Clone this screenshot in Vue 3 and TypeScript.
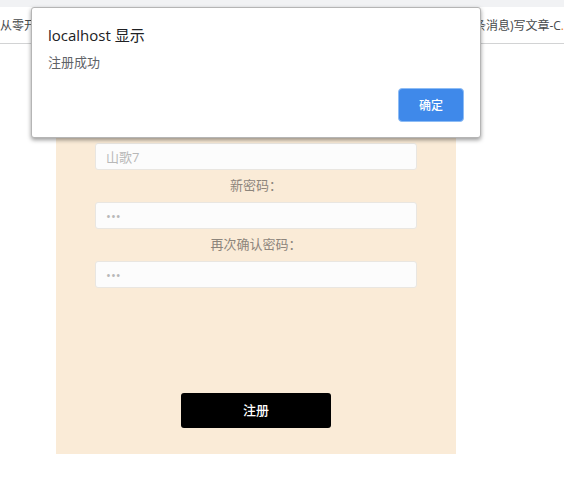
<script setup lang="ts">
import { ref } from 'vue'

const username = ref<string>('山歌7')
const password = ref<string>('123')
const confirmation = ref<string>('123')
const dialogOpen = ref<boolean>(true)

function register(): void {
  dialogOpen.value = true
}
</script>

<template>
  <div class="window">
    <div class="toolbar"></div>
    <nav class="bookmarks">
      <a href="#">从零开</a>
      <a href="#">条消息)写文章-C<span class="mark">.</span></a>
    </nav>

    <main class="page">
      <form class="card" @submit.prevent="register">
        <input v-model="username" class="field" type="text" aria-label="用户名" />
        <label class="label" for="password">新密码：</label>
        <input id="password" v-model="password" class="field" type="password" />
        <label class="label" for="confirmation">再次确认密码：</label>
        <input id="confirmation" v-model="confirmation" class="field" type="password" />
        <button class="submit" type="submit">注册</button>
      </form>
    </main>

    <div v-if="dialogOpen" class="dialog" role="alertdialog" aria-labelledby="title" aria-describedby="message">
      <h1 id="title">localhost 显示</h1>
      <p id="message">注册成功</p>
      <button class="confirm" type="button" @click="dialogOpen = false">确定</button>
    </div>
  </div>
</template>

<style>
body {
  margin: 0;
  background: #fff;
}
</style>

<style scoped>
.window {
  position: relative;
  min-height: 100vh;
  overflow: hidden;
  font-family: "Open Sans", "Noto Sans CJK SC", sans-serif;
  font-size: 13px;
}

.toolbar {
  height: 7px;
  background: #f1f2f4;
}

.bookmarks {
  display: flex;
  justify-content: space-between;
  align-items: center;
  height: 36px;
  border-bottom: 1px solid #d2d3d4;
  font-size: 12px;
}

.bookmarks a {
  color: #46494c;
  text-decoration: none;
  white-space: nowrap;
}

.mark {
  color: #f08030;
}

.page {
  padding: 40px 56px 26px;
}

.card {
  display: flex;
  flex-direction: column;
  align-items: center;
  box-sizing: border-box;
  max-width: 400px;
  padding: 59px 39px 26px;
  background: #faebd7;
}

.field {
  box-sizing: border-box;
  width: 100%;
  height: 27px;
  padding: 0 10px;
  border: 1px solid #e9e6e1;
  border-radius: 3px;
  background: #fcfcfc;
  color: #b8b8b8;
  font: inherit;
}

.label {
  height: 32px;
  color: #8d857c;
  line-height: 30px;
}

.submit {
  width: 150px;
  height: 35px;
  margin-top: 105px;
  padding: 0 0 2px;
  border: 0;
  border-radius: 3px;
  background: #000;
  color: #fff;
  font: inherit;
  font-weight: 500;
}

.dialog {
  position: absolute;
  top: 7px;
  left: 50%;
  display: flex;
  flex-direction: column;
  box-sizing: border-box;
  width: 450px;
  max-width: 100%;
  margin-left: -251px;
  padding: 16px 16px 15px;
  border: 1px solid #b5b5b5;
  border-radius: 3px;
  background: #fff;
  box-shadow: 0 2px 4px rgba(0, 0, 0, 0.4);
}

.dialog h1 {
  margin: 0;
  color: #202124;
  font-size: 15px;
  font-weight: 400;
  line-height: 22px;
}

.dialog p {
  margin: 6px 0 16px;
  color: #5f6368;
  line-height: 20px;
}

.confirm {
  align-self: flex-end;
  width: 66px;
  height: 34px;
  border: 1px solid #8dbcf5;
  border-radius: 4px;
  background: #3f89ea;
  color: #fff;
  font: inherit;
  font-size: 12px;
  font-weight: 500;
}
</style>
